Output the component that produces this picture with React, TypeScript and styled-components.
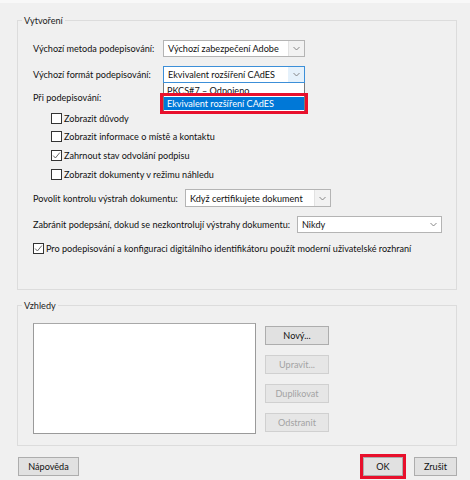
import React from 'react';
import styled, { createGlobalStyle, css } from 'styled-components';

const GlobalStyle = createGlobalStyle`
  html, body {
    margin: 0;
    padding: 0;
    background: #f0f0f0;
  }
  * {
    box-sizing: border-box;
  }
`;

const FONT_SIZE = 9.1;

const Dialog = styled.div`
  width: 470px;
  height: 480px;
  background: #f0f0f0;
  border-top: 3px solid #f8f8f8;
  padding: 11px 13px 0 17px;
  display: flex;
  flex-direction: column;
  font-family: Lato, 'Liberation Sans', sans-serif;
  font-size: ${FONT_SIZE}px;
  color: #111;
  overflow: hidden;
`;

const Group = styled.fieldset<{ $height: number }>`
  margin: 0;
  padding: 0;
  border: 1px solid #dcdcdc;
  height: ${(p) => p.$height}px;
  min-width: 0;
  position: relative;
`;

const Legend = styled.legend`
  margin-left: 4px;
  padding: 0 2px;
  font-size: ${FONT_SIZE}px;
  line-height: 13px;
  color: #222;
`;

const GroupBody = styled.div`
  padding: 0 0 0 15px;
  display: flex;
  flex-direction: column;
`;

const Row = styled.div<{ $top: number; $labelWidth: number }>`
  display: flex;
  align-items: center;
  margin-top: ${(p) => p.$top}px;
  & > span:first-child {
    width: ${(p) => p.$labelWidth}px;
    flex: none;
    white-space: nowrap;
  }
`;

const SelectWrap = styled.div`
  position: relative;
`;

const Select = styled.div<{ $width: number; $height?: number; $focused?: boolean }>`
  width: ${(p) => p.$width}px;
  height: ${(p) => p.$height ?? 17}px;
  border: 1px solid #b4b4b4;
  background: #fff;
  display: flex;
  align-items: center;
  ${(p) =>
    p.$focused &&
    css`
      border-color: #3c8fd8;
    `}
`;

const SelectText = styled.span`
  flex: 1;
  padding-left: 4px;
  white-space: nowrap;
  overflow: hidden;
`;

const Arrow = styled.span<{ $tone?: 'gray' | 'blue' | 'white' }>`
  width: 16px;
  height: 100%;
  display: flex;
  align-items: center;
  justify-content: center;
  background: ${(p) =>
    p.$tone === 'blue' ? '#e5f1fb' : p.$tone === 'white' ? '#fff' : '#f2f2f2'};
  border-left: 1px solid
    ${(p) => (p.$tone === 'white' ? '#fff' : p.$tone === 'blue' ? '#e5f1fb' : '#e2e2e2')};
`;

const DropList = styled.div`
  position: absolute;
  left: 0;
  top: 17px;
  width: 142px;
  background: #fff;
  border: 1px solid #7a7a7a;
  border-top: none;
  padding: 1px 0 2px;
  z-index: 2;
`;

const DropItem = styled.div<{ $active?: boolean }>`
  height: 13px;
  line-height: 13px;
  padding-left: 3px;
  white-space: nowrap;
  ${(p) =>
    p.$active &&
    css`
      background: #0078d7;
      color: #fff;
      outline: 3px solid #e8102c;
      outline-offset: 1px;
    `}
`;

const SectionLabel = styled.div`
  margin-top: 8px;
  line-height: 14px;
`;

const CheckList = styled.div`
  margin-top: 4px;
  padding-left: 18px;
  display: flex;
  flex-direction: column;
`;

const CheckRow = styled.label<{ $height?: number; $top?: number }>`
  display: flex;
  align-items: center;
  gap: 2px;
  height: ${(p) => p.$height ?? 18.6}px;
  margin-top: ${(p) => p.$top ?? 0}px;
  white-space: nowrap;
`;

const Box = styled.span`
  width: 11px;
  height: 11px;
  border: 1px solid #333;
  background: #fff;
  display: flex;
  align-items: center;
  justify-content: center;
  flex: none;
`;

const AppearanceBody = styled.div`
  padding: 11px 0 0 15px;
  display: flex;
  gap: 9px;
`;

const ListBox = styled.div`
  width: 223px;
  height: 111px;
  background: #fff;
  border: 1px solid #9a9a9a;
  border-top-color: #a8a8a8;
`;

const ButtonColumn = styled.div`
  display: flex;
  flex-direction: column;
  gap: 10px;
  padding-top: 3px;
`;

const Button = styled.button<{ $width: number; $disabled?: boolean; $marked?: boolean }>`
  width: ${(p) => p.$width}px;
  height: 19px;
  padding: 0;
  font-family: inherit;
  font-size: ${FONT_SIZE}px;
  color: ${(p) => (p.$disabled ? '#a3a3a3' : '#111')};
  background: ${(p) => (p.$disabled ? '#e6e6e6' : '#e1e1e1')};
  border: 1px solid ${(p) => (p.$disabled ? '#d0d0d0' : '#adadad')};
  ${(p) =>
    p.$marked &&
    css`
      outline: 3px solid #e8102c;
      outline-offset: 0;
    `}
`;

const Footer = styled.div`
  display: flex;
  align-items: center;
  margin-top: 11px;
  margin-left: 1px;
  gap: 11px;
  & > :first-child {
    margin-right: auto;
  }
`;

const Chevron = () => (
  <svg width="7" height="5" viewBox="0 0 7 5">
    <path d="M0.5 1 L3.5 4 L6.5 1" fill="none" stroke="#7a7a7a" strokeWidth="0.9" />
  </svg>
);

const Check = () => (
  <svg width="9" height="9" viewBox="0 0 9 9">
    <path d="M1.2 4.6 L3.4 7 L7.8 1.6" fill="none" stroke="#555" strokeWidth="0.9" />
  </svg>
);

const options = [
  { text: 'Zobrazit důvody', checked: false },
  { text: 'Zobrazit informace o místě a kontaktu', checked: false },
  { text: 'Zahrnout  stav odvolání podpisu', checked: true },
  { text: 'Zobrazit dokumenty v režimu náhledu', checked: false },
];

const App: React.FC = () => {
  return (
    <>
      <GlobalStyle />
      <Dialog>
        <Group $height={276}>
          <Legend>Vytvoření</Legend>
          <GroupBody>
            <Row $top={13} $labelWidth={130}>
              <span>Výchozí metoda podepisování:</span>
              <Select $width={142}>
                <SelectText>Výchozí zabezpečení Adobe</SelectText>
                <Arrow>
                  <Chevron />
                </Arrow>
              </Select>
            </Row>
            <Row $top={9} $labelWidth={130}>
              <span>Výchozí formát podepisování:</span>
              <SelectWrap>
                <Select $width={142} $focused>
                  <SelectText>Ekvivalent rozšíření CAdES</SelectText>
                  <Arrow $tone="blue">
                    <Chevron />
                  </Arrow>
                </Select>
                <DropList>
                  <DropItem>PKCS#7 – Odpojeno</DropItem>
                  <DropItem $active>Ekvivalent rozšíření CAdES</DropItem>
                </DropList>
              </SelectWrap>
            </Row>
            <SectionLabel>Při podepisování:</SectionLabel>
            <CheckList>
              {options.map((o) => (
                <CheckRow key={o.text}>
                  <Box>{o.checked && <Check />}</Box>
                  <span>{o.text}</span>
                </CheckRow>
              ))}
            </CheckList>
            <Row $top={6} $labelWidth={152}>
              <span>Povolit kontrolu výstrah dokumentu:</span>
              <Select $width={146} $height={18}>
                <SelectText>Když certifikujete dokument</SelectText>
                <Arrow>
                  <Chevron />
                </Arrow>
              </Select>
            </Row>
            <Row $top={9} $labelWidth={264}>
              <span>Zabránit podepsání, dokud se nezkontrolují výstrahy dokumentu:</span>
              <Select $width={145}>
                <SelectText>Nikdy</SelectText>
                <Arrow $tone="white">
                  <Chevron />
                </Arrow>
              </Select>
            </Row>
            <CheckRow $height={14} $top={8}>
              <Box>
                <Check />
              </Box>
              <span>
                Pro podepisování a konfiguraci digitálního identifikátoru použít moderní uživatelské
                rozhraní
              </span>
            </CheckRow>
          </GroupBody>
        </Group>
        <Group $height={147} style={{ marginTop: 9 }}>
          <Legend>Vzhledy</Legend>
          <AppearanceBody>
            <ListBox />
            <ButtonColumn>
              <Button $width={64}>Nový...</Button>
              <Button $width={64} $disabled>
                Upravit...
              </Button>
              <Button $width={64} $disabled>
                Duplikovat
              </Button>
              <Button $width={64} $disabled>
                Odstranit
              </Button>
            </ButtonColumn>
          </AppearanceBody>
        </Group>
        <Footer>
          <Button $width={61}>Nápověda</Button>
          <Button $width={40} $marked>
            OK
          </Button>
          <Button $width={43}>Zrušit</Button>
        </Footer>
      </Dialog>
    </>
  );
};

export default App;
